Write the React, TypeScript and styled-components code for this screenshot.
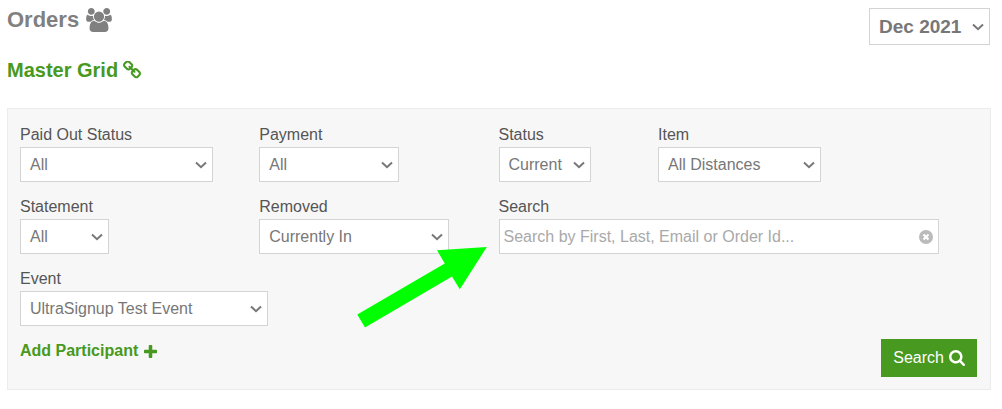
import React from 'react';
import styled, { createGlobalStyle } from 'styled-components';

const GlobalStyle = createGlobalStyle`
  *, *::before, *::after { box-sizing: border-box; }
  body {
    margin: 0;
    background: #fff;
    color: #555;
    font: 16px/24px "Liberation Sans", Arial, sans-serif;
  }
`;

const Page = styled.main`
  padding: 8px 11px 19px 7px;
`;

const Header = styled.header`
  display: flex;
  justify-content: space-between;
  align-items: flex-start;
  padding-right: 1px;
`;

const Title = styled.h1`
  display: flex;
  align-items: center;
  gap: 7px;
  margin: 0;
  color: #808080;
  font-size: 22px;
  line-height: 24px;
`;

const GridLink = styled.a`
  display: inline-flex;
  align-items: center;
  gap: 5px;
  margin: 13px 0 26px;
  color: #489920;
  font-size: 20px;
  font-weight: bold;
  line-height: 24px;
  text-decoration: none;
`;

const Panel = styled.form`
  position: relative;
  padding: 13px 13px 12px 12px;
  border: 1px solid #ececec;
  background: #f7f7f7;
`;

const Fields = styled.div`
  display: grid;
  grid-template-columns: repeat(12, 1fr);
  row-gap: 12px;
`;

const Field = styled.div<{ $span: number }>`
  grid-column: span ${(p) => p.$span};
`;

const Label = styled.label`
  display: block;
  line-height: 25px;
`;

const SelectFrame = styled.div<{ $width: number }>`
  position: relative;
  width: ${(p) => p.$width}px;
  max-width: 100%;
`;

const Select = styled.select<{ $large?: boolean }>`
  appearance: none;
  display: block;
  width: 100%;
  height: ${(p) => (p.$large ? 37 : 35)}px;
  padding: 0 20px 0 9px;
  border: 1px solid #d4d4d4;
  border-radius: 0;
  background: #fff;
  color: #777;
  font-family: inherit;
  font-size: ${(p) => (p.$large ? 19 : 16)}px;
  font-weight: ${(p) => (p.$large ? 'bold' : 'normal')};
`;

const Chevron = styled.svg`
  position: absolute;
  top: 50%;
  right: 6px;
  width: 12px;
  height: 8px;
  margin-top: -4px;
  pointer-events: none;
`;

const SearchFrame = styled.div`
  display: flex;
  align-items: center;
  width: 440px;
  max-width: 100%;
  height: 35px;
  padding: 0 5px 0 4px;
  border: 1px solid #d4d4d4;
  background: #fff;
`;

const SearchInput = styled.input`
  flex: 1;
  min-width: 0;
  height: 33px;
  padding: 0;
  border: 0;
  background: transparent;
  color: #777;
  font: inherit;
  &::placeholder { color: #a9a9a9; opacity: 1; }
`;

const ClearButton = styled.button`
  display: flex;
  padding: 0;
  border: 0;
  background: none;
  cursor: pointer;
`;

const Footer = styled.div`
  display: flex;
  justify-content: space-between;
  align-items: flex-start;
  margin-top: 13px;
`;

const AddLink = styled.a`
  display: inline-flex;
  align-items: center;
  gap: 6px;
  color: #489920;
  font-weight: bold;
  text-decoration: none;
`;

const SubmitButton = styled.button`
  display: flex;
  align-items: center;
  gap: 5px;
  height: 38px;
  padding: 0 12px;
  border: 0;
  background: #489920;
  color: #fff;
  font: inherit;
  cursor: pointer;
`;

const Pointer = styled.svg`
  position: absolute;
  top: 137px;
  left: 348px;
  width: 132px;
  height: 84px;
  pointer-events: none;
`;

const icons = {
  users: {
    box: '0 0 1920 1792',
    d: 'M593 896q-162 5-265 128h-134q-82 0-138-40.5t-56-118.5q0-353 124-353 6 0 43.5 21t97.5 42.5 119 21.5q67 0 133-23-5 37-5 66 0 139 81 256zm1071 637q0 120-73 189.5t-194 69.5h-874q-121 0-194-69.5t-73-189.5q0-53 3.5-103.5t14-109 26.5-108.5 43-97.5 62-81 85.5-53.5 111.5-20q10 0 43 21.5t73 48 107 48 135 21.5 135-21.5 107-48 73-48 43-21.5q61 0 111.5 20t85.5 53.5 62 81 43 97.5 26.5 108.5 14 109 3.5 103.5zm-1024-1277q0 106-75 181t-181 75-181-75-75-181 75-181 181-75 181 75 75 181zm704 384q0 159-112.5 271.5t-271.5 112.5-271.5-112.5-112.5-271.5 112.5-271.5 271.5-112.5 271.5 112.5 112.5 271.5zm576 225q0 78-56 118.5t-138 40.5h-134q-103-123-265-128 81-117 81-256 0-29-5-66 66 23 133 23 59 0 119-21.5t97.5-42.5 43.5-21q124 0 124 353zm-128-609q0 106-75 181t-181 75-181-75-75-181 75-181 181-75 181 75 75 181z',
  },
  link: {
    box: '80 80 1632 1632',
    d: 'M1520 1216q0-40-28-68l-208-208q-28-28-68-28-42 0-72 32 3 3 19 18.5t21.5 21.5 15 19 13 25.5 3.5 27.5q0 40-28 68t-68 28q-15 0-27.5-3.5t-25.5-13-19-15-21.5-21.5-18.5-19q-33 31-33 73 0 40 28 68l206 207q27 27 68 27 40 0 68-26l147-146q28-28 28-67zm-703-705q0-40-28-68l-206-207q-28-28-68-28-39 0-68 27l-147 146q-28 28-28 67 0 40 28 68l208 208q27 27 68 27 42 0 72-31-3-3-19-18.5t-21.5-21.5-15-19-13-25.5-3.5-27.5q0-40 28-68t68-28q15 0 27.5 3.5t25.5 13 19 15 21.5 21.5 18.5 19q33-31 33-73zm895 705q0 120-85 203l-147 146q-83 83-203 83-121 0-204-85l-206-207q-83-83-83-203 0-123 88-209l-88-88q-86 88-208 88-120 0-204-84l-208-208q-84-84-84-204t85-203l147-146q83-83 203-83 121 0 204 85l206 207q83 83 83 203 0 123-88 209l88 88q86-88 208-88 120 0 204 84l208 208q84 84 84 204z',
  },
  plus: {
    box: '192 128 1408 1408',
    d: 'M1600 736v192q0 40-28 68t-68 28h-416v416q0 40-28 68t-68 28h-192q-40 0-68-28t-28-68v-416h-416q-40 0-68-28t-28-68v-192q0-40 28-68t68-28h416v-416q0-40 28-68t68-28h192q40 0 68 28t28 68v416h416q40 0 68 28t28 68z',
  },
  search: {
    box: '64 128 1664 1664',
    d: 'M1216 832q0-185-131.5-316.5t-316.5-131.5-316.5 131.5-131.5 316.5 131.5 316.5 316.5 131.5 316.5-131.5 131.5-316.5zm512 832q0 52-38 90t-90 38q-54 0-90-38l-343-342q-179 124-399 124-143 0-273.5-55.5t-225-150-150-225-55.5-273.5 55.5-273.5 150-225 225-150 273.5-55.5 273.5 55.5 225 150 150 225 55.5 273.5q0 220-124 399l343 343q37 37 37 90z',
  },
};

function Icon({ name, width, height }: { name: keyof typeof icons; width: number; height: number }) {
  return (
    <svg width={width} height={height} viewBox={icons[name].box} fill="currentColor" aria-hidden="true">
      <path d={icons[name].d} />
    </svg>
  );
}

function Dropdown({ id, width, value, large, label }: {
  id: string; width: number; value: string; large?: boolean; label?: string;
}) {
  return (
    <SelectFrame $width={width}>
      <Select id={id} $large={large} aria-label={label}>
        <option>{value}</option>
      </Select>
      <Chevron viewBox="0 0 12 8" aria-hidden="true">
        <path d="M1 1.5l5 4.7 5-4.7" fill="none" stroke="#777" strokeWidth="2" />
      </Chevron>
    </SelectFrame>
  );
}

function SelectField({ id, label, value, width, span }: {
  id: string; label: string; value: string; width: number; span: number;
}) {
  return (
    <Field $span={span}>
      <Label htmlFor={id}>{label}</Label>
      <Dropdown id={id} width={width} value={value} />
    </Field>
  );
}

export default function App() {
  return (
    <>
      <GlobalStyle />
      <Page>
        <Header>
          <Title>Orders <Icon name="users" width={26} height={24} /></Title>
          <Dropdown id="month" width={121} value="Dec 2021" large label="Month" />
        </Header>
        <GridLink href="#grid">Master Grid <Icon name="link" width={18} height={18} /></GridLink>
        <Panel onSubmit={(e) => e.preventDefault()}>
          <Fields>
            <SelectField id="paid" label="Paid Out Status" value="All" width={193} span={3} />
            <SelectField id="payment" label="Payment" value="All" width={140} span={3} />
            <SelectField id="status" label="Status" value="Current" width={92} span={2} />
            <SelectField id="item" label="Item" value="All Distances" width={163} span={4} />
            <SelectField id="statement" label="Statement" value="All" width={89} span={3} />
            <SelectField id="removed" label="Removed" value="Currently In" width={190} span={3} />
            <Field $span={6}>
              <Label htmlFor="search">Search</Label>
              <SearchFrame>
                <SearchInput id="search" type="text" placeholder="Search by First, Last, Email or Order Id..." />
                <ClearButton type="button" aria-label="Clear search">
                  <svg width="14" height="14" viewBox="0 0 14 14" aria-hidden="true">
                    <circle cx="7" cy="7" r="7" fill="#bbb" />
                    <path d="M4.5 4.5l5 5M9.5 4.5l-5 5" stroke="#fff" strokeWidth="2.2" />
                  </svg>
                </ClearButton>
              </SearchFrame>
            </Field>
            <SelectField id="event" label="Event" value="UltraSignup Test Event" width={248} span={12} />
          </Fields>
          <Footer>
            <AddLink href="#add">Add Participant <Icon name="plus" width={13} height={13} /></AddLink>
            <SubmitButton type="submit">Search <Icon name="search" width={16} height={16} /></SubmitButton>
          </Footer>
          <Pointer viewBox="356 246 132 84" aria-hidden="true">
            <path d="M486.8 247L437 250.2l7.8 13.3-87.5 51 7.7 13 87-51 7.8 12.7z" fill="#0f0" />
          </Pointer>
        </Panel>
      </Page>
    </>
  );
}
